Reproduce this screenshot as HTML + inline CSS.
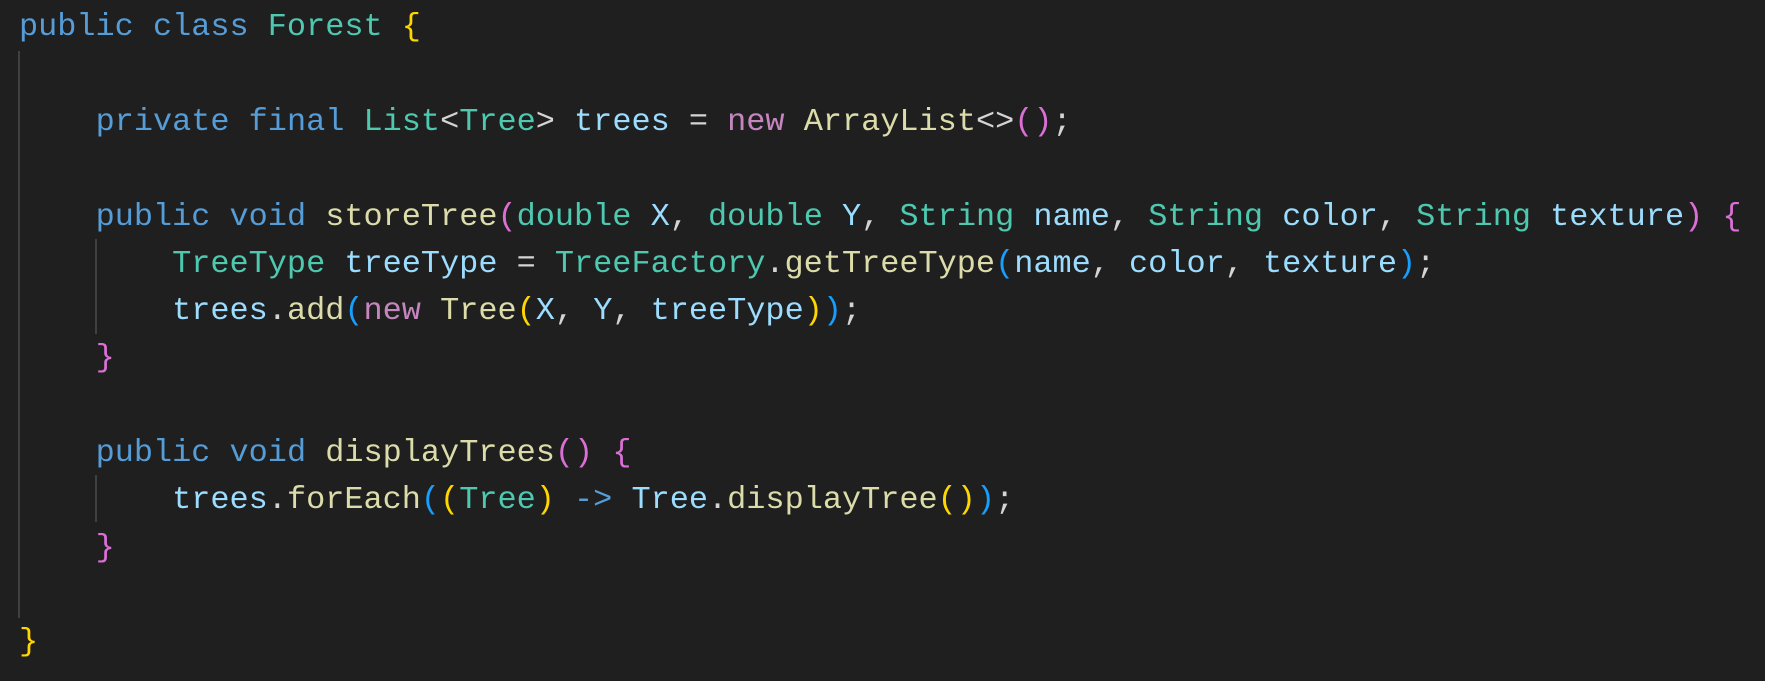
<!DOCTYPE html>
<html><head><meta charset="utf-8"><style>
html,body{margin:0;padding:0;background:#1f1f1f;width:1765px;height:681px;overflow:hidden}
pre{margin:0;position:absolute;left:19px;top:3.4px;font-family:"Liberation Mono",monospace;font-size:31.9px;line-height:47.3px;color:#d4d4d4;white-space:pre}
.k{color:#569cd6}.t{color:#4ec9b0}.v{color:#9cdcfe}.f{color:#dcdcaa}.g{color:#ffd700}.p{color:#da70d6}.b{color:#179fff}.n{color:#c586c0}
.guide{position:absolute;width:2px;background:#404040}
</style></head><body>
<div class="guide" style="left:18px;top:51px;height:567px"></div>
<div class="guide" style="left:95px;top:239px;height:95px"></div>
<div class="guide" style="left:95px;top:475px;height:47px"></div>
<pre><span class="k">public</span> <span class="k">class</span> <span class="t">Forest</span> <span class="g">{</span>

    <span class="k">private</span> <span class="k">final</span> <span class="t">List</span>&lt;<span class="t">Tree</span>&gt; <span class="v">trees</span> = <span class="n">new</span> <span class="f">ArrayList</span>&lt;&gt;<span class="p">()</span>;

    <span class="k">public</span> <span class="k">void</span> <span class="f">storeTree</span><span class="p">(</span><span class="t">double</span> <span class="v">X</span>, <span class="t">double</span> <span class="v">Y</span>, <span class="t">String</span> <span class="v">name</span>, <span class="t">String</span> <span class="v">color</span>, <span class="t">String</span> <span class="v">texture</span><span class="p">)</span> <span class="p">{</span>
        <span class="t">TreeType</span> <span class="v">treeType</span> = <span class="t">TreeFactory</span>.<span class="f">getTreeType</span><span class="b">(</span><span class="v">name</span>, <span class="v">color</span>, <span class="v">texture</span><span class="b">)</span>;
        <span class="v">trees</span>.<span class="f">add</span><span class="b">(</span><span class="n">new</span> <span class="f">Tree</span><span class="g">(</span><span class="v">X</span>, <span class="v">Y</span>, <span class="v">treeType</span><span class="g">)</span><span class="b">)</span>;
    <span class="p">}</span>

    <span class="k">public</span> <span class="k">void</span> <span class="f">displayTrees</span><span class="p">()</span> <span class="p">{</span>
        <span class="v">trees</span>.<span class="f">forEach</span><span class="b">(</span><span class="g">(</span><span class="t">Tree</span><span class="g">)</span> <span class="k">-&gt;</span> <span class="v">Tree</span>.<span class="f">displayTree</span><span class="g">()</span><span class="b">)</span>;
    <span class="p">}</span>

<span class="g">}</span></pre>
</body></html>
